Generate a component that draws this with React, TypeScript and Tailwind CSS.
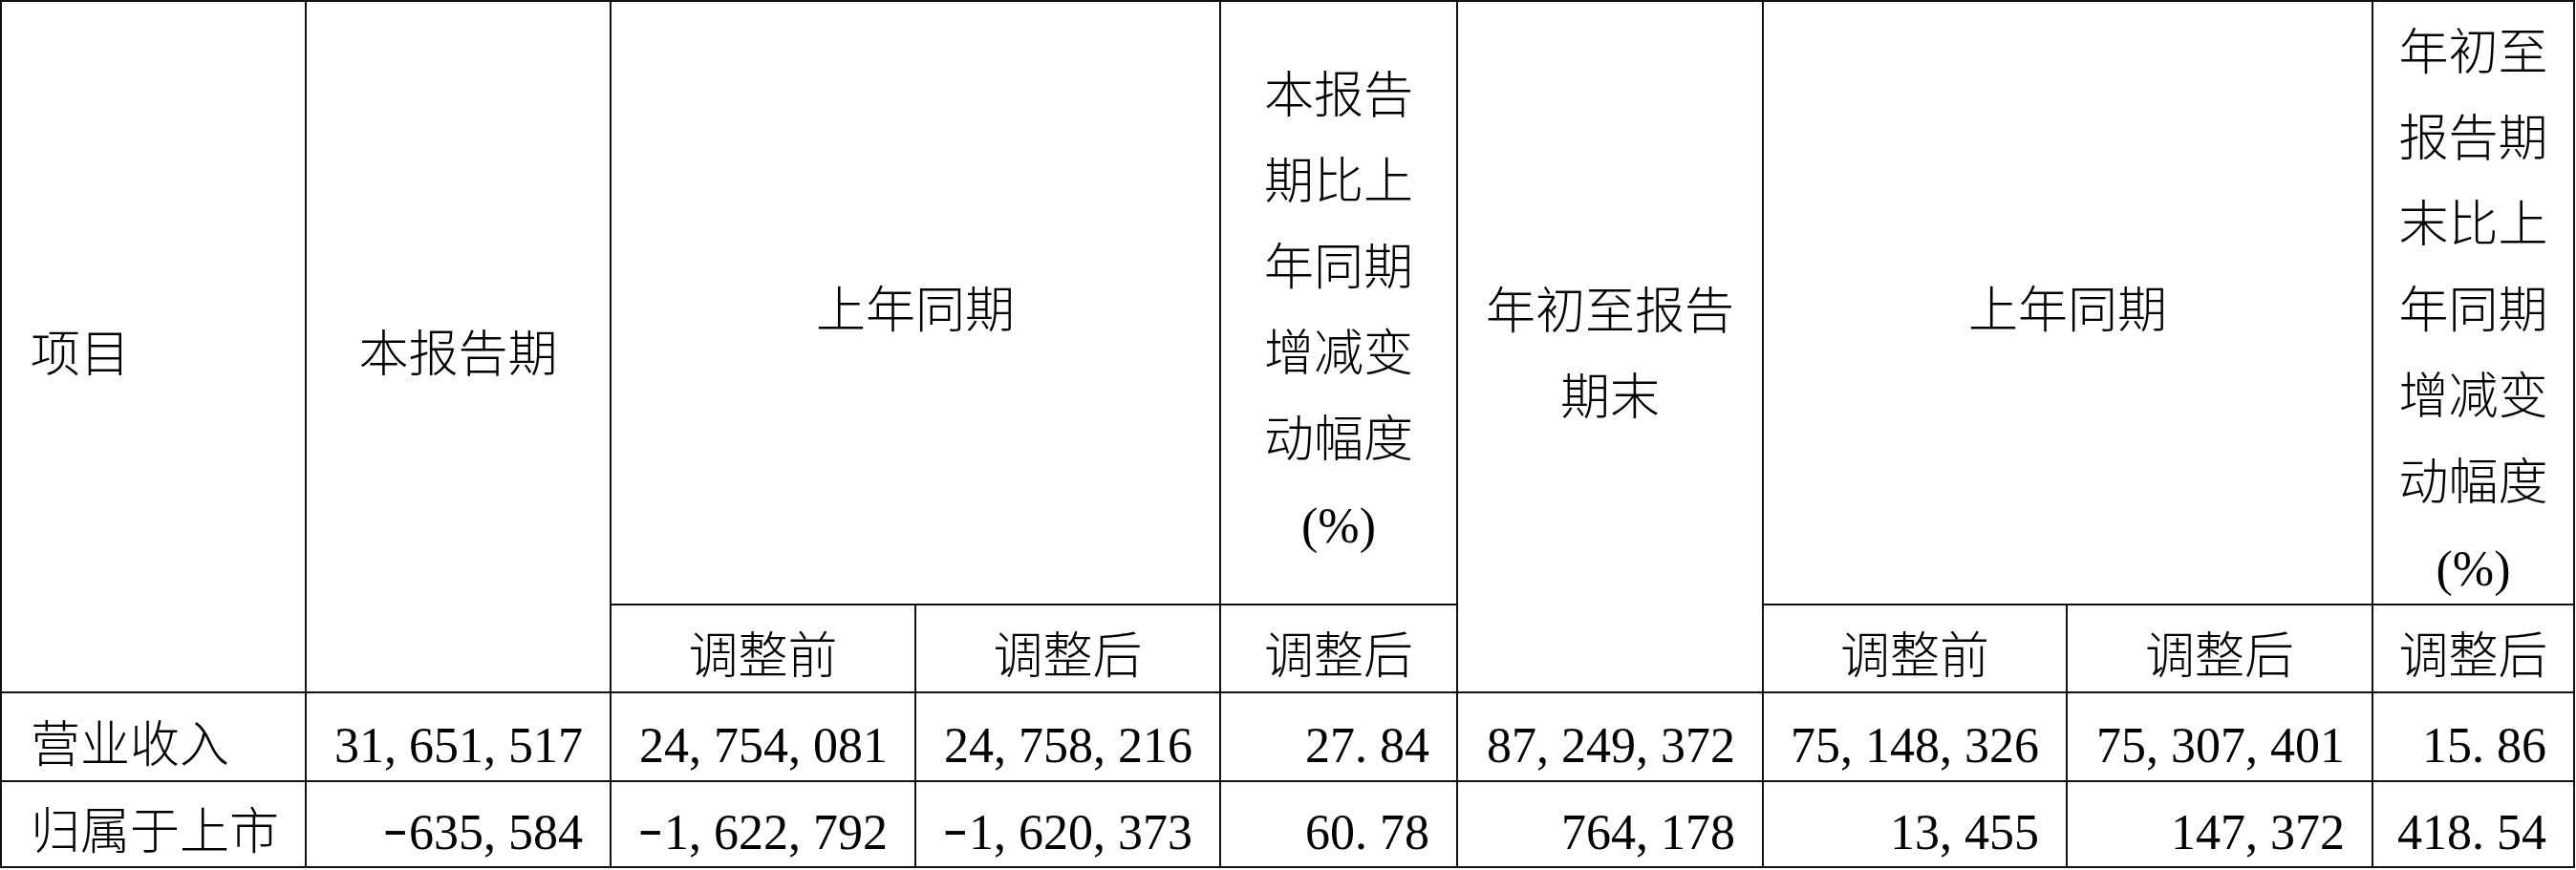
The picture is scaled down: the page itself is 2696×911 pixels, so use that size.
import React from 'react'

const cell = 'border-2 border-[#111] p-0'
// glyphs in the source sit a little lower than the line box centre
const nudge = 'inline-block translate-y-[9px]'

function Num({ v }: { v: string }) {
  // digits are half an em; commas, dots and the minus take a full half-em cell too
  return (
    <span className={nudge}>
      {v.split('').map((c, i) =>
        c === ',' || c === '.' ? (
          <span key={i} className="inline-block w-[0.5em] text-left">
            {c}
          </span>
        ) : c === '-' ? (
          <span key={i} className="inline-block w-[0.56em] text-center">
            <span className="inline-block scale-x-150 -translate-y-[4px]">{c}</span>
          </span>
        ) : (
          <span key={i}>{c}</span>
        )
      )}
    </span>
  )
}

function Lines({ lines }: { lines: string[] }) {
  return (
    <div className="flex flex-col items-center leading-[90px] translate-y-[9px]">
      {lines.map((l, i) => (
        <span key={i} className="whitespace-nowrap">
          {l}
        </span>
      ))}
    </div>
  )
}

const rows = [
  {
    name: '营业收入',
    values: ['31,651,517', '24,754,081', '24,758,216', '27.84', '87,249,372', '75,148,326', '75,307,401', '15.86'],
  },
  {
    name: '归属于上市',
    values: ['-635,584', '-1,622,792', '-1,620,373', '60.78', '764,178', '13,455', '147,372', '418.54'],
  },
]

export default function App() {
  return (
    <div className="bg-white w-[2696px] h-[911px] overflow-hidden text-black text-[52px] font-light font-[Liberation_Serif,Noto_Sans_CJK_SC,serif]">
      <table className="table-fixed border-collapse w-[2695px]">
        <colgroup>
          <col className="w-[319px]" />
          <col className="w-[319px]" />
          <col className="w-[319px]" />
          <col className="w-[319px]" />
          <col className="w-[248px]" />
          <col className="w-[320px]" />
          <col className="w-[318px]" />
          <col className="w-[320px]" />
          <col className="w-[211px]" />
        </colgroup>
        <tbody>
          <tr className="h-[632px]">
            <td rowSpan={2} className={`${cell} pl-[30px] text-left align-middle`}>
              <span className={nudge}>项目</span>
            </td>
            <td rowSpan={2} className={`${cell} text-center align-middle`}>
              <span className={nudge}>本报告期</span>
            </td>
            <td colSpan={2} className={`${cell} text-center align-middle`}>
              <span className={nudge}>上年同期</span>
            </td>
            <td className={`${cell} align-middle`}>
              <Lines lines={['本报告', '期比上', '年同期', '增减变', '动幅度', '(%)']} />
            </td>
            <td rowSpan={2} className={`${cell} align-middle`}>
              <Lines lines={['年初至报告', '期末']} />
            </td>
            <td colSpan={2} className={`${cell} text-center align-middle`}>
              <span className={nudge}>上年同期</span>
            </td>
            <td className={`${cell} align-middle`}>
              <Lines lines={['年初至', '报告期', '末比上', '年同期', '增减变', '动幅度', '(%)']} />
            </td>
          </tr>
          <tr className="h-[92px]">
            {['调整前', '调整后', '调整后', '调整前', '调整后', '调整后'].map((t, i) => (
              <td key={i} className={`${cell} text-center`}>
                <span className={nudge}>{t}</span>
              </td>
            ))}
          </tr>
          {rows.map((r, ri) => (
            <tr key={r.name} className={ri === 0 ? 'h-[93px]' : 'h-[90px]'}>
              <td className={`${cell} pl-[30px] text-left whitespace-nowrap`}>
                <span className={nudge}>{r.name}</span>
              </td>
              {r.values.map((v, i) => (
                <td key={i} className={`${cell} pr-[28px] text-right whitespace-nowrap`}>
                  <Num v={v} />
                </td>
              ))}
            </tr>
          ))}
        </tbody>
      </table>
    </div>
  )
}
